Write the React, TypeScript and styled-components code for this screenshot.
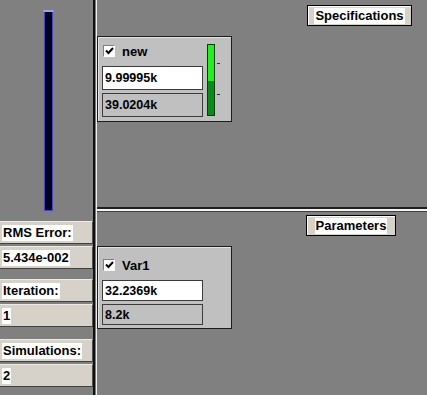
import styled, { createGlobalStyle } from 'styled-components';

const GlobalStyle = createGlobalStyle`
  html, body {
    margin: 0;
    padding: 0;
    background: #808080;
  }
  body {
    font-family: "Liberation Sans", Arial, sans-serif;
  }
`;

const Screen = styled.div`
  display: flex;
  width: 427px;
  height: 395px;
  overflow: hidden;
  background: #808080;
`;

const LeftColumn = styled.div`
  display: flex;
  flex-direction: column;
  width: 93px;
  flex-shrink: 0;
`;

const BarSlot = styled.div`
  display: flex;
  justify-content: center;
  padding: 10px 0 0 3px;
  height: 202px;
`;

const ErrorBar = styled.div`
  width: 11px;
  height: 202px;
  box-sizing: border-box;
  border: 1px solid #7272d4;
  border-top: 2px solid #a0a0ec;
  background: #000026;
  box-shadow: inset 1px 0 0 #4848b0, inset -1px 0 0 #4848b0, inset 0 -1px 0 #4848b0;
`;

const StatGroup = styled.div<{ $gap: number }>`
  display: flex;
  flex-direction: column;
  margin-top: ${(p) => p.$gap}px;
`;

const StatBox = styled.div`
  height: 21px;
  margin-bottom: 2px;
  display: flex;
  align-items: center;
  padding-left: 2px;
  background: #d6d2ca;
  border-bottom: 1px solid #404040;
  border-top: 1px solid #ecebe6;
  border-right: 1px solid #505050;
  font-size: 13px;
  font-weight: bold;
  color: #000;
`;

const Highlight = styled.span`
  background: #fff;
  padding: 0 1px;
  line-height: 16px;
`;

const Divider = styled.div`
  width: 4px;
  flex-shrink: 0;
  background: linear-gradient(to right, #101010 0 2px, #7a7a7a 2px 3px, #f0f0f0 3px 4px);
`;

const RightColumn = styled.div`
  display: flex;
  flex-direction: column;
  flex: 1;
`;

const Panel = styled.div<{ $height?: number }>`
  display: flex;
  flex-direction: column;
  height: ${(p) => (p.$height ? `${p.$height}px` : 'auto')};
  flex: ${(p) => (p.$height ? '0 0 auto' : '1')};
`;

const HDivider = styled.div`
  height: 5px;
  flex-shrink: 0;
  background: linear-gradient(to bottom, #202020 0 2px, #f4f4f4 2px 4px, #404040 4px 5px);
`;

const HeaderButton = styled.div<{ $top: number; $right: number; $width: number }>`
  align-self: flex-end;
  margin-top: ${(p) => p.$top}px;
  margin-right: ${(p) => p.$right}px;
  width: ${(p) => p.$width}px;
  height: 21px;
  display: flex;
  align-items: center;
  justify-content: center;
  box-sizing: border-box;
  border: 1px solid #000;
  background: #d6d2ca;
  box-shadow: inset 1px 1px 0 #fff;
  font-size: 13px;
  font-weight: bold;
  color: #000;
`;

const Card = styled.div<{ $top: number; $height: number; $pad: number }>`
  margin-top: ${(p) => p.$top}px;
  width: 135px;
  height: ${(p) => p.$height}px;
  box-sizing: border-box;
  border: 1px solid #1c1c1c;
  background: #c0c0c0;
  box-shadow: inset 1px 1px 0 #e4e4e4;
  display: flex;
  padding: ${(p) => p.$pad}px 0 0 4px;
  gap: 4px;
`;

const CardBody = styled.div`
  display: flex;
  flex-direction: column;
  width: 101px;
`;

const CheckRow = styled.div`
  display: flex;
  align-items: center;
  height: 14px;
  padding-left: 1px;
  gap: 7px;
  margin-bottom: 8px;
  font-size: 13px;
  font-weight: bold;
`;

const CheckBox = styled.div`
  width: 12px;
  height: 12px;
  box-sizing: border-box;
  border: 1px solid #808080;
  border-right-color: #fff;
  border-bottom-color: #fff;
  background: #fff;
  display: flex;
  align-items: center;
  justify-content: center;
`;

const ValueField = styled.div<{ $editable?: boolean }>`
  height: 24px;
  box-sizing: border-box;
  margin-bottom: 3px;
  border: 1px solid #3c3c3c;
  background: ${(p) => (p.$editable ? '#fff' : '#c0c0c0')};
  display: flex;
  align-items: center;
  padding-left: 2px;
  font-size: 12.5px;
  font-weight: bold;
  color: #000;
`;

const Gauge = styled.div`
  position: relative;
  width: 8px;
  height: 72px;
  box-sizing: border-box;
  border: 1px solid #0c3a0c;
  background: #0a8a1a;
  display: flex;
  flex-direction: column;
`;

const GaugeFill = styled.div`
  background: #22ee22;
`;

const Tick = styled.div<{ $y: number }>`
  position: absolute;
  left: 9px;
  top: ${(p) => p.$y}px;
  width: 3px;
  height: 1px;
  background: #303030;
`;

const Check = () => (
  <svg width="9" height="8" viewBox="0 0 9 8">
    <path d="M1 3.5 L3.5 6 L8 1" stroke="#000" strokeWidth="2" fill="none" />
  </svg>
);

const Stat = ({ label, value, gap }: { label: string; value: string; gap: number }) => (
  <StatGroup $gap={gap}>
    <StatBox>
      <Highlight>{label}</Highlight>
    </StatBox>
    <StatBox>
      <Highlight>{value}</Highlight>
    </StatBox>
  </StatGroup>
);

const App = () => {
  const gaugeLevel = 0.52;

  return (
    <>
      <GlobalStyle />
      <Screen>
        <LeftColumn>
          <BarSlot>
            <ErrorBar />
          </BarSlot>
          <Stat label="RMS Error:" value="5.434e-002" gap={9} />
          <Stat label="Iteration:" value="1" gap={8} />
          <Stat label="Simulations:" value="2" gap={10} />
        </LeftColumn>
        <Divider />
        <RightColumn>
          <Panel $height={207}>
            <HeaderButton $top={5} $right={15} $width={105}>
              <Highlight>Specifications</Highlight>
            </HeaderButton>
            <Card $top={10} $height={86} $pad={7}>
              <CardBody>
                <CheckRow>
                  <CheckBox>
                    <Check />
                  </CheckBox>
                  new
                </CheckRow>
                <ValueField $editable>9.99995k</ValueField>
                <ValueField>39.0204k</ValueField>
              </CardBody>
              <Gauge>
                <GaugeFill style={{ height: `${gaugeLevel * 100}%` }} />
                <Tick $y={18} />
                <Tick $y={49} />
              </Gauge>
            </Card>
          </Panel>
          <HDivider />
          <Panel>
            <HeaderButton $top={3} $right={31} $width={90}>
              <Highlight>Parameters</Highlight>
            </HeaderButton>
            <Card $top={10} $height={83} $pad={11}>
              <CardBody>
                <CheckRow>
                  <CheckBox>
                    <Check />
                  </CheckBox>
                  Var1
                </CheckRow>
                <ValueField $editable>32.2369k</ValueField>
                <ValueField>8.2k</ValueField>
              </CardBody>
            </Card>
          </Panel>
        </RightColumn>
      </Screen>
    </>
  );
};

export default App;
